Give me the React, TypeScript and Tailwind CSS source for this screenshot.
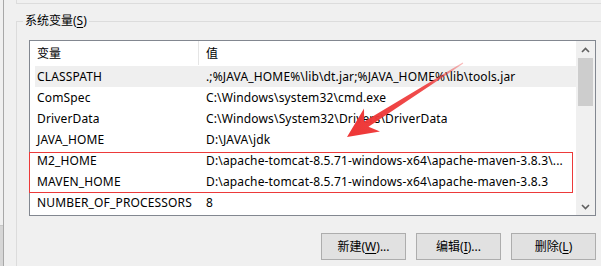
import React from "react";

const rows: { name: string; value: string; selected?: boolean }[] = [
  { name: "CLASSPATH", value: ".;%JAVA_HOME%\\lib\\dt.jar;%JAVA_HOME%\\lib\\tools.jar", selected: true },
  { name: "ComSpec", value: "C:\\Windows\\system32\\cmd.exe" },
  { name: "DriverData", value: "C:\\Windows\\System32\\Drivers\\DriverData" },
  { name: "JAVA_HOME", value: "D:\\JAVA\\jdk" },
  { name: "M2_HOME", value: "D:\\apache-tomcat-8.5.71-windows-x64\\apache-maven-3.8.3\\..." },
  { name: "MAVEN_HOME", value: "D:\\apache-tomcat-8.5.71-windows-x64\\apache-maven-3.8.3" },
  { name: "NUMBER_OF_PROCESSORS", value: "8" },
];

function Btn({ pre, key1, post }: { pre: string; key1: string; post: string }) {
  return (
    <div className="w-[85px] h-[27px] border border-[#adadad] bg-[#e1e1e1] flex items-center justify-center text-[12px] leading-[16px] text-black">
      <span>
        {pre}(<span className="underline underline-offset-2">{key1}</span>){post}
      </span>
    </div>
  );
}

export default function App() {
  return (
    <div
      className="relative w-[601px] h-[266px] bg-[#f0f0f0] overflow-hidden flex text-black"
      style={{ fontFamily: '"Noto Sans", "Noto Sans CJK SC", sans-serif' }}
    >
      {/* left window edge */}
      <div className="w-[3px] h-full flex flex-col">
        <div className="flex-1" />
        <div className="h-[41px] bg-[#d6d6d6] border-t border-[#c8c8c8]" />
      </div>
      <div className="w-px h-full bg-[#a8a8a8]" />
      <div className="w-[12px]" />

      {/* main */}
      <div className="flex-1 flex flex-col">
        <div className="h-[4px] border-l border-b border-[#dcdcdc]" />
        <div className="h-[17px]" />
        <div className="flex-1 border-t border-l border-[#dcdcdc]">
          <div className="w-fit ml-[6px] -mt-[9px] px-[2px] bg-[#f0f0f0] text-[12px] leading-[16px]">
            系统变量(<span className="underline underline-offset-2">S</span>)
          </div>

          <div className="ml-[12px] mt-[11px] w-[567px]">
            {/* list view */}
            <div className="h-[176px] border border-[#828790] bg-white flex">
              <div className="w-[546px] flex flex-col">
                <div className="h-[25px] flex text-[12px] leading-[25px]">
                  <div className="w-[168px] pl-[7px]">变量</div>
                  <div className="w-px h-[24px] bg-[#e5e5e5]" />
                  <div className="flex-1 pl-[7px]">值</div>
                </div>
                {rows.map((r) => (
                  <div
                    key={r.name}
                    className={`ml-[5px] h-[21px] flex text-[12px] leading-[21px] tracking-[0.15px] ${r.selected ? "bg-[#efefef]" : ""}`}
                  >
                    <div className="w-[171px] pl-[2px] whitespace-nowrap">{r.name}</div>
                    <div className="flex-1 whitespace-nowrap overflow-hidden">{r.value}</div>
                  </div>
                ))}
              </div>
              {/* scrollbar */}
              <div className="w-[19px] bg-[#f0f0f0] flex flex-col items-center">
                <div className="h-[17px] w-full flex items-center justify-center">
                  <svg width="9" height="6" viewBox="0 0 9 6">
                    <path d="M1 5 L4.5 1.5 L8 5" fill="none" stroke="#606060" strokeWidth="1.6" />
                  </svg>
                </div>
                <div className="w-[15px] h-[48px] bg-[#cdcdcd]" />
                <div className="flex-1" />
                <div className="h-[17px] w-full flex items-center justify-center">
                  <svg width="9" height="6" viewBox="0 0 9 6">
                    <path d="M1 1 L4.5 4.5 L8 1" fill="none" stroke="#606060" strokeWidth="1.6" />
                  </svg>
                </div>
              </div>
            </div>

            {/* buttons */}
            <div className="mt-[17px] flex justify-end gap-[10px]">
              <Btn pre="新建" key1="W" post="..." />
              <Btn pre="编辑" key1="I" post="..." />
              <Btn pre="删除" key1="L" post="" />
            </div>
          </div>
        </div>
      </div>

      {/* annotation: red box */}
      <div className="absolute left-[29px] top-[152px] w-[544px] h-[41px] border border-[#ec3a3a] pointer-events-none" />

      {/* annotation: arrow */}
      <svg className="absolute left-0 top-0 pointer-events-none" width="601" height="266" viewBox="0 0 601 266">
        <defs>
          <linearGradient id="ag" x1="463" y1="63" x2="347" y2="137" gradientUnits="userSpaceOnUse">
            <stop offset="0" stopColor="#f04a4a" stopOpacity="0.35" />
            <stop offset="0.3" stopColor="#ee3a3a" stopOpacity="0.9" />
            <stop offset="1" stopColor="#ee3636" stopOpacity="1" />
          </linearGradient>
        </defs>
        <polygon
          points="347,137 380,131.5 368.5,126.8 463.3,63.4 462.7,62.6 364.2,121.5 364,108.5"
          fill="url(#ag)"
        />
      </svg>
    </div>
  );
}
